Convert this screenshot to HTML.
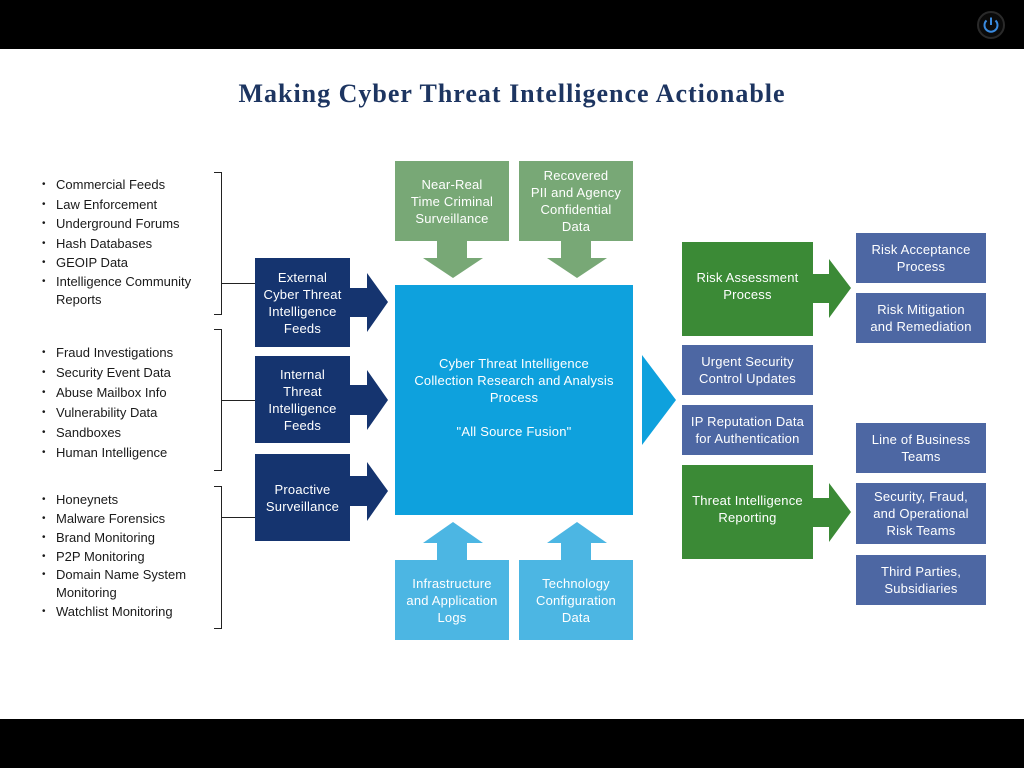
<!DOCTYPE html>
<html><head><meta charset="utf-8"><style>
*{margin:0;padding:0;box-sizing:border-box}
body{width:1024px;height:768px;background:#000;position:relative;overflow:hidden;font-family:"Liberation Sans",sans-serif}
#slide{position:absolute;left:0;top:49px;width:1024px;height:670px;background:#fff}
.b{position:absolute;display:flex;align-items:center;justify-content:center;text-align:center;color:#fff;font-size:13px;line-height:17px;letter-spacing:.2px}
.navy{background:#15346f}.lg{background:#78a876}.dg{background:#3b8a36}.blue{background:#0ea1dd}.lb{background:#4cb6e3}.sl{background:#4d67a3}
ul{position:absolute;list-style:none;font-size:13px;color:#1a1a1a;line-height:19.5px}
ul li{padding-left:14px;position:relative}
ul li:before{content:"•";position:absolute;left:0;font-size:10px}
.br{position:absolute;border:1px solid #222;border-left:none;width:8px}
.hl{position:absolute;height:1px;background:#222}
h1{position:absolute;top:79px;left:0;width:1024px;text-align:center;font:700 26px "Liberation Serif",serif;color:#1d3561;letter-spacing:1px}
</style></head><body>
<div id="slide"></div>
<svg style="position:absolute;left:976px;top:10px" width="30" height="30"><circle cx="15" cy="15" r="13" fill="#0a0a0a" stroke="#2a2a2a" stroke-width="2"/><path d="M10.5 10.5a6.5 6.5 0 1 0 9 0" fill="none" stroke="#3a8be0" stroke-width="2"/><line x1="15" y1="7.5" x2="15" y2="15" stroke="#3a8be0" stroke-width="2"/></svg>
<h1>Making Cyber Threat Intelligence Actionable</h1>

<ul style="left:42px;top:175px"><li>Commercial Feeds</li><li>Law Enforcement</li><li>Underground Forums</li><li>Hash Databases</li><li>GEOIP Data</li><li style="line-height:18px">Intelligence Community<br>Reports</li></ul>
<ul style="left:42px;top:343px;line-height:20px"><li>Fraud Investigations</li><li>Security Event Data</li><li>Abuse Mailbox Info</li><li>Vulnerability Data</li><li>Sandboxes</li><li>Human Intelligence</li></ul>
<ul style="left:42px;top:490px;line-height:19px"><li>Honeynets</li><li>Malware Forensics</li><li>Brand Monitoring</li><li>P2P Monitoring</li><li style="line-height:18px">Domain Name System<br>Monitoring</li><li>Watchlist Monitoring</li></ul>

<div class="br" style="left:214px;top:172px;height:143px"></div><div class="hl" style="left:222px;top:283px;width:33px"></div>
<div class="br" style="left:214px;top:329px;height:142px"></div><div class="hl" style="left:222px;top:400px;width:33px"></div>
<div class="br" style="left:214px;top:486px;height:143px"></div><div class="hl" style="left:222px;top:517px;width:33px"></div>

<svg style="position:absolute;left:0;top:0" width="1024" height="768">
<g fill="#15346f">
<polygon points="349,288 367,288 367,273 388,302 367,332 367,317 349,317"/>
<polygon points="349,385 367,385 367,370 388,400 367,430 367,415 349,415"/>
<polygon points="349,476 367,476 367,462 388,491 367,521 367,506 349,506"/>
</g>
<g fill="#78a876">
<polygon points="437,240 467,240 467,258 483,258 453,278 423,258 437,258"/>
<polygon points="561,240 591,240 591,258 607,258 577,278 547,258 561,258"/>
</g>
<g fill="#4cb6e3">
<polygon points="437,561 467,561 467,543 483,543 453,522 423,543 437,543"/>
<polygon points="561,561 591,561 591,543 607,543 577,522 547,543 561,543"/>
</g>
<polygon fill="#0ea1dd" points="642,355 676,400 642,445"/>
<g fill="#3b8a36">
<polygon points="812,274 829,274 829,259 851,288 829,318 829,303 812,303"/>
<polygon points="812,498 829,498 829,483 851,512 829,542 829,527 812,527"/>
</g>
</svg>

<div class="b navy" style="left:255px;top:258px;width:95px;height:89px">External<br>Cyber Threat<br>Intelligence<br>Feeds</div>
<div class="b navy" style="left:255px;top:356px;width:95px;height:87px">Internal<br>Threat<br>Intelligence<br>Feeds</div>
<div class="b navy" style="left:255px;top:454px;width:95px;height:87px">Proactive<br>Surveillance</div>

<div class="b lg" style="left:395px;top:161px;width:114px;height:80px">Near-Real<br>Time Criminal<br>Surveillance</div>
<div class="b lg" style="left:519px;top:161px;width:114px;height:80px">Recovered<br>PII and Agency<br>Confidential<br>Data</div>

<div class="b blue" style="left:395px;top:285px;width:238px;height:230px;flex-direction:column;padding-top:12px">Cyber Threat Intelligence<br>Collection Research and Analysis<br>Process<br><br>"All Source Fusion"<br><br></div>

<div class="b lb" style="left:395px;top:560px;width:114px;height:80px">Infrastructure<br>and Application<br>Logs</div>
<div class="b lb" style="left:519px;top:560px;width:114px;height:80px">Technology<br>Configuration<br>Data</div>

<div class="b dg" style="left:682px;top:242px;width:131px;height:94px;padding-bottom:6px">Risk Assessment<br>Process</div>
<div class="b sl" style="left:682px;top:345px;width:131px;height:50px">Urgent Security<br>Control Updates</div>
<div class="b sl" style="left:682px;top:405px;width:131px;height:50px">IP Reputation Data<br>for Authentication</div>
<div class="b dg" style="left:682px;top:465px;width:131px;height:94px;padding-bottom:6px">Threat Intelligence<br>Reporting</div>

<div class="b sl" style="left:856px;top:233px;width:130px;height:50px">Risk Acceptance<br>Process</div>
<div class="b sl" style="left:856px;top:293px;width:130px;height:50px">Risk Mitigation<br>and Remediation</div>
<div class="b sl" style="left:856px;top:423px;width:130px;height:50px">Line of Business<br>Teams</div>
<div class="b sl" style="left:856px;top:483px;width:130px;height:61px">Security, Fraud,<br>and Operational<br>Risk Teams</div>
<div class="b sl" style="left:856px;top:555px;width:130px;height:50px">Third Parties,<br>Subsidiaries</div>
</body></html>
